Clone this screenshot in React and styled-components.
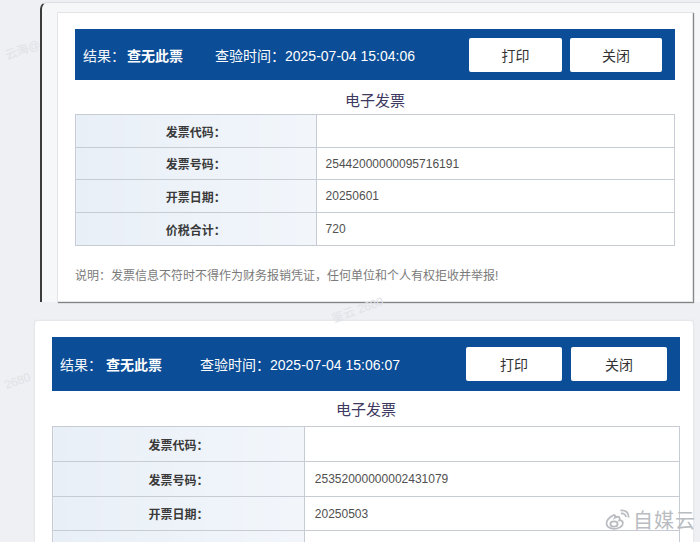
import React from "react";
import styled, { createGlobalStyle } from "styled-components";

const Global = createGlobalStyle`
  html, body { margin: 0; padding: 0; }
  body {
    background: #eef0f3;
    font-family: "Liberation Sans", "Noto Sans CJK SC", sans-serif;
    color: #333;
  }
`;

const Page = styled.div`
  position: relative;
  width: 700px;
  height: 542px;
  overflow: hidden;
  background: #eef0f3;
  padding-top: 2px;
  box-sizing: border-box;
`;

const Frame = styled.div`
  margin-left: 40px;
  border-left: 2px solid #3c3c3c;
  border-top: 1px solid #dcdde0;
  border-top-left-radius: 7px;
  background: #f6f7f9;
  padding: 9px 7px 0 15px;
`;

const Card = styled.div`
  background: #fff;
  border: 1px solid ${(p) => p.$border};
  border-radius: ${(p) => p.$radius}px;
  box-shadow: ${(p) => p.$shadow};
  padding: 16px ${(p) => p.$padRight}px ${(p) => p.$padBottom}px 17px;
  margin: ${(p) => p.$margin};
`;

const Header = styled.div`
  display: flex;
  align-items: center;
  height: ${(p) => p.$h}px;
  background: #0b4d96;
  padding: 0 13px 0 8px;
  color: #fff;
  font-size: ${(p) => p.$fs}px;
`;

const Label = styled.span`
  font-weight: 400;
  color: #f2f5fa;
`;

const Result = styled.span`
  font-weight: 700;
  margin-left: ${(p) => p.$gap}px;
`;

const Time = styled.span`
  margin-left: ${(p) => p.$gap}px;
  flex: 1;
`;

const Buttons = styled.div`
  display: flex;
  gap: ${(p) => p.$gap}px;
`;

const Button = styled.button`
  width: ${(p) => p.$w}px;
  height: 34px;
  border: none;
  border-radius: 2px;
  background: #fff;
  color: #333;
  font-family: inherit;
  font-size: 14px;
  padding: 0;
  cursor: pointer;
`;

const Title = styled.div`
  text-align: center;
  font-size: 15px;
  line-height: 20px;
  color: #3e3961;
  padding: ${(p) => p.$pt}px 0 ${(p) => p.$pb}px;
`;

const Table = styled.table`
  width: 100%;
  border-collapse: collapse;
  table-layout: fixed;
  font-size: 12px;
`;

const Row = styled.tr`
  height: ${(p) => p.$h}px;
`;

const Key = styled.td`
  width: 40%;
  border: 1px solid #c7ccd4;
  background: linear-gradient(90deg, #e9eff7 0%, #f2f6fb 100%);
  text-align: center;
  font-weight: 700;
  color: #3a3a3a;
  padding: 0;
`;

const Value = styled.td`
  border: 1px solid #c7ccd4;
  padding: 0 0 0 ${(p) => p.$pl}px;
  color: #505050;
`;

const Note = styled.div`
  margin-top: 21px;
  font-size: 12px;
  line-height: 18px;
  color: #7a7a7a;
`;

const Mark = styled.div`
  position: absolute;
  right: 4px;
  bottom: 8px;
  display: flex;
  align-items: center;
  gap: 3px;
  color: #b9bcc1;
  font-size: 20px;
  letter-spacing: 1px;
  font-family: "Noto Sans CJK SC", sans-serif;
`;

const Faint = styled.div`
  position: absolute;
  left: ${(p) => p.$x}px;
  top: ${(p) => p.$y}px;
  transform: rotate(-20deg);
  color: #dfe2e6;
  font-size: 12px;
`;

function Invoice({ v }) {
  return (
    <Card
      $border={v.border}
      $radius={v.radius}
      $shadow={v.shadow}
      $padRight={v.padRight}
      $padBottom={v.padBottom}
      $margin={v.margin}
    >
      <Header $h={v.headH} $fs={v.fs}>
        <Label>结果：</Label>
        <Result $gap={v.resGap}>查无此票</Result>
        <Time $gap={v.timeGap}>查验时间：{v.time}</Time>
        <Buttons $gap={v.btnGap}>
          <Button $w={v.btnW[0]}>打印</Button>
          <Button $w={v.btnW[1]}>关闭</Button>
        </Buttons>
      </Header>
      <Title $pt={v.titlePt} $pb={v.titlePb}>电子发票</Title>
      <Table>
        <tbody>
          {v.rows.map(([k, val], i) => (
            <Row key={i} $h={v.rowH[i]}>
              <Key>{k}</Key>
              <Value $pl={v.valPl}>{val}</Value>
            </Row>
          ))}
        </tbody>
      </Table>
      {v.note && <Note>说明：发票信息不符时不得作为财务报销凭证，任何单位和个人有权拒收并举报!</Note>}
    </Card>
  );
}

const first = {
  border: "#e2e4e7",
  radius: 0,
  shadow: "1px 1px 1px rgba(0,0,0,0.45)",
  padRight: 17,
  padBottom: 16,
  margin: "0",
  headH: 51,
  fs: 14,
  resGap: 2,
  timeGap: 32,
  btnGap: 8,
  btnW: [93, 92],
  time: "2025-07-04 15:04:06",
  titlePt: 11,
  titlePb: 3,
  rowH: [33, 32, 33, 33],
  valPl: 9,
  rows: [
    ["发票代码：", ""],
    ["发票号码：", "25442000000095716191"],
    ["开票日期：", "20250601"],
    ["价税合计：", "720"],
  ],
  note: true,
};

const second = {
  border: "#e6e8eb",
  radius: 4,
  shadow: "0 0 2px rgba(0,0,0,0.06)",
  padRight: 13,
  padBottom: 0,
  margin: "18px 6px 0 34px",
  headH: 54,
  fs: 14,
  resGap: 4,
  timeGap: 38,
  btnGap: 9,
  btnW: [96, 96],
  time: "2025-07-04 15:06:07",
  titlePt: 9,
  titlePb: 6,
  rowH: [35, 35, 34, 34],
  valPl: 10,
  rows: [
    ["发票代码：", ""],
    ["发票号码：", "25352000000002431079"],
    ["开票日期：", "20250503"],
    ["", ""],
  ],
  note: false,
};

function WeiboIcon() {
  return (
    <svg width="26" height="22" viewBox="0 0 26 22" fill="none" stroke="#b9bcc1" strokeWidth="1.8">
      <path d="M10 6 C5 8 2 12 2.5 15 C3 19 9 20.5 13 19.5 C18 18.3 20 15 18.5 12.5 C17.6 11 16 11.2 15.3 11.3 C16 9.5 15.7 8 14.3 7.8 C13 7.6 11.5 8.4 10.8 8.8 C11.4 7.5 11.3 6.2 10 6 Z" />
      <ellipse cx="10" cy="15" rx="3.6" ry="2.6" />
      <path d="M17 4.5 C19.5 4 21.8 5.5 22 8" />
      <path d="M16.5 1.5 C21 0.6 25 3.5 24.6 8.5" />
    </svg>
  );
}

export default function App() {
  return (
    <Page>
      <Global />
      <Faint $x={4} $y={40}>云海@</Faint>
      <Faint $x={4} $y={374}>2680</Faint>
      <Faint $x={330} $y={300}>鉴云 2680</Faint>
      <Frame>
        <Invoice v={first} />
      </Frame>
      <Invoice v={second} />
      <Mark>
        <WeiboIcon />
        <span>自媒云</span>
      </Mark>
    </Page>
  );
}
